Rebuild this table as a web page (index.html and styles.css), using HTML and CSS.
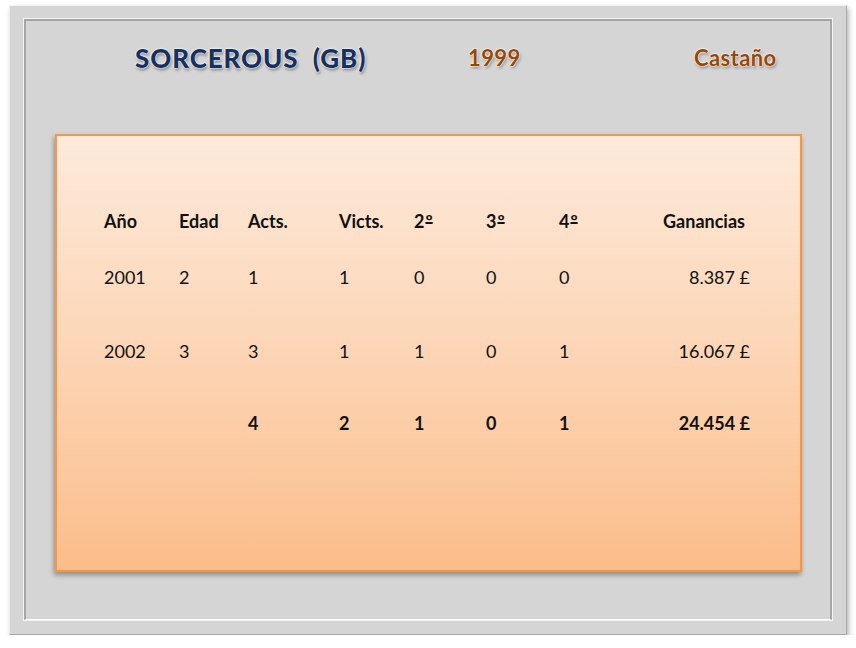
FILE: index.html
```html
<!DOCTYPE html>
<html lang="es">
<head>
<meta charset="utf-8">
<title>SORCEROUS (GB)</title>
<link rel="stylesheet" href="styles.css">
</head>
<body>
<div class="outer">
  <div class="inner">
    <header class="head">
      <span></span>
      <h1 class="title">SORCEROUS  (GB)</h1>
      <span class="sub">1999</span>
      <span class="sub">Castaño</span>
    </header>
    <section class="card">
      <div class="table">
        <div class="row hdr">
          <span>Año</span><span>Edad</span><span>Acts.</span><span>Victs.</span><span>2<span class="ord">º</span></span><span>3<span class="ord">º</span></span><span>4<span class="ord">º</span></span><span class="money h">Ganancias</span>
        </div>
        <div class="row r1">
          <span>2001</span><span>2</span><span>1</span><span>1</span><span>0</span><span>0</span><span>0</span><span class="money">8.387 £</span>
        </div>
        <div class="row r2">
          <span>2002</span><span>3</span><span>3</span><span>1</span><span>1</span><span>0</span><span>1</span><span class="money">16.067 £</span>
        </div>
        <div class="row tot">
          <span></span><span></span><span>4</span><span>2</span><span>1</span><span>0</span><span>1</span><span class="money">24.454 £</span>
        </div>
      </div>
    </section>
  </div>
</div>
</body>
</html>
```

FILE: styles.css
```css
html, body {
  margin: 0;
  padding: 0;
  background: #ffffff;
}
body {
  padding: 5px 0 0 9px;
  font-family: Lato, "Open Sans", "Liberation Sans", sans-serif;
}
.outer {
  box-sizing: border-box;
  width: 838px;
  height: 630px;
  background: #d5d5d5;
  border-top: 1px solid #f2f2f2;
  border-left: 1px solid #eeeeee;
  border-right: 1px solid #a8a8a8;
  border-bottom: 1px solid #a8a8a8;
  box-shadow: 2px 3px 5px rgba(0, 0, 0, 0.28);
  padding: 13px 14px 14px 14px;
}
.inner {
  box-sizing: border-box;
  height: 100%;
  border-top: 2px solid #a6a6a6;
  border-left: 2px solid #a6a6a6;
  border-bottom: 1px solid #ffffff;
  border-right: 2px solid #a6a6a6;
  outline: 1px solid #f4f4f4;
  display: flex;
  flex-direction: column;
}
.head {
  flex: none;
  height: 113px;
  display: grid;
  grid-template-columns: 109px 333px 226px auto;
  align-items: start;
  padding-top: 21px;
  box-sizing: border-box;
}
.title {
  margin: 0;
  white-space: pre;
  font-size: 26px;
  font-weight: 900;
  letter-spacing: 0.9px;
  color: #17305e;
  line-height: 32px;
  text-shadow: 0 0 2px #fff, 0 0 2px #fff, 0 0 1px #fff, 1px 2px 3px rgba(0, 0, 0, 0.45);
}
.sub {
  font-size: 22px;
  font-weight: 700;
  letter-spacing: 0.4px;
  color: #974706;
  line-height: 30px;
  padding-top: 1px;
  text-shadow: 0 0 2px #fff, 0 0 2px #fff, 0 0 1px #fff, 1px 2px 3px rgba(0, 0, 0, 0.4);
}
.card {
  flex: none;
  margin: 0 28px 0 29px;
  height: 434px;
  border: 2px solid #f79646;
  background: linear-gradient(to bottom, #fdeadb 0%, #fcd5b5 50%, #fbbd8b 100%);
  box-shadow: -1px 3px 5px rgba(0, 0, 0, 0.35);
}
.table {
  padding: 73px 0 0 47px;
  font-size: 18px;
  color: #111;
}
.row {
  display: grid;
  grid-template-columns: 75px 69px 91px 75px 72px 73px 40px 151px;
  line-height: 24px;
}
.ord {
  margin-left: 1px;
  text-decoration: underline;
  text-decoration-thickness: 2px;
  text-underline-offset: -6px;
  text-decoration-skip-ink: none;
}
.hdr, .tot { font-weight: 700; }
.hdr { height: 56px; }
.r1 { height: 74px; }
.r2 { height: 72px; }
.money { text-align: right; }
.money.h { padding-right: 5px; }
```
